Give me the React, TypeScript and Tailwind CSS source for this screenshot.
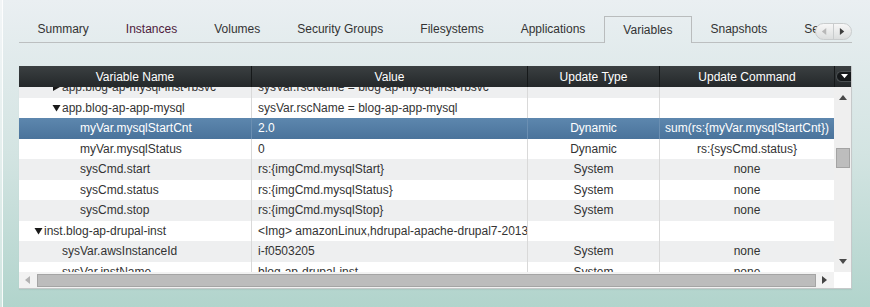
import React from "react";

// Linhas da árvore de variáveis
type Row = {
  level: number;
  arrow?: "down" | "right";
  name: string;
  value: string;
  type?: string;
  cmd?: string;
  selected?: boolean;
};

const tabs = [
  "Summary",
  "Instances",
  "Volumes",
  "Security Groups",
  "Filesystems",
  "Applications",
  "Variables",
  "Snapshots",
  "Services",
];

const rows: Row[] = [
  { level: 1, arrow: "right", name: "app.blog-ap-mysql-inst-rbsvc", value: "sysVar.rscName = blog-ap-mysql-inst-rbsvc" },
  { level: 1, arrow: "down", name: "app.blog-ap-app-mysql", value: "sysVar.rscName = blog-ap-app-mysql" },
  { level: 2, name: "myVar.mysqlStartCnt", value: "2.0", type: "Dynamic", cmd: "sum(rs:{myVar.mysqlStartCnt})", selected: true },
  { level: 2, name: "myVar.mysqlStatus", value: "0", type: "Dynamic", cmd: "rs:{sysCmd.status}" },
  { level: 2, name: "sysCmd.start", value: "rs:{imgCmd.mysqlStart}", type: "System", cmd: "none" },
  { level: 2, name: "sysCmd.status", value: "rs:{imgCmd.mysqlStatus}", type: "System", cmd: "none" },
  { level: 2, name: "sysCmd.stop", value: "rs:{imgCmd.mysqlStop}", type: "System", cmd: "none" },
  { level: 0, arrow: "down", name: "inst.blog-ap-drupal-inst", value: "<Img> amazonLinux,hdrupal-apache-drupal7-20130214" },
  { level: 1, name: "sysVar.awsInstanceId", value: "i-f0503205", type: "System", cmd: "none" },
  { level: 1, name: "sysVar.instName", value: "blog-ap-drupal-inst", type: "System", cmd: "none" },
];

const Arrow = ({ dir }: { dir: "down" | "right" }) => (
  <svg width="9" height="8" viewBox="0 0 9 8" className="shrink-0">
    {dir === "down" ? (
      <polygon points="0.5,1 8.5,1 4.5,7.5" fill="#1a1a1a" />
    ) : (
      <polygon points="1,0 8,4 1,8" fill="#1a1a1a" />
    )}
  </svg>
);

const Tri = ({ dir, color, size = 6 }: { dir: "up" | "down" | "left" | "right"; color: string; size?: number }) => {
  const pts = {
    up: "0,6 8,6 4,1",
    down: "0,1 8,1 4,6",
    left: "6,0 6,8 1,4",
    right: "1,0 1,8 6,4",
  }[dir];
  return (
    <svg width={size + 2} height={size + 2} viewBox="0 0 8 8">
      <polygon points={pts} fill={color} />
    </svg>
  );
};

const TreeRow = ({ row, index }: { row: Row; index: number }) => {
  const bg = row.selected
    ? "bg-gradient-to-b from-[#5d87ae] to-[#4a739b] text-white"
    : index % 2 === 0
    ? "bg-[#eeeff0] text-[#333]"
    : "bg-white text-[#333]";
  const divider = row.selected ? "border-[#6b8fb2]" : "border-[#d9d9d9]";
  return (
    <div className={`flex h-[20.5px] items-center ${bg}`}>
      <div className="w-[232px] shrink-0 h-full flex items-center overflow-hidden whitespace-nowrap">
        <div style={{ width: 25 + row.level * 18 }} className="shrink-0 flex justify-end pr-px">
          {row.arrow && <Arrow dir={row.arrow} />}
        </div>
        <span>{row.name}</span>
      </div>
      <div className={`w-[276px] shrink-0 h-full flex items-center border-l ${divider} pl-[6px] overflow-hidden whitespace-nowrap`}>
        {row.value}
      </div>
      <div className={`w-[132px] shrink-0 h-full flex items-center justify-center border-l ${divider} overflow-hidden whitespace-nowrap`}>
        {row.type}
      </div>
      <div className={`w-[175px] shrink-0 h-full border-l ${divider} px-[5px] overflow-hidden whitespace-nowrap text-center leading-[20.5px]`}>
        {row.cmd}
      </div>
    </div>
  );
};

export default function App() {
  return (
    <div className="w-[870px] h-[307px] flex bg-gradient-to-b from-[#eaeff2] via-[#d3e4e2] to-[#b1d4cc] font-['Liberation_Sans',Arial,sans-serif] text-[12px] text-[#333] overflow-hidden">
      {/* borda esquerda da janela */}
      <div className="w-[2px] bg-white/40" />
      <div className="w-px bg-white/90" />

      <div className="pl-[16px] flex flex-col">
        {/* Abas */}
        <div className="relative w-[833px] pt-[16px] overflow-hidden">
          <div className="flex h-[27px] whitespace-nowrap">
            {tabs.map((t) =>
              t === "Variables" ? (
                <div key={t} className="h-full flex items-center px-[18.5px] border border-b-0 border-[#b9bcbd] shrink-0">
                  {t}
                </div>
              ) : (
                <div
                  key={t}
                  className={`h-full flex items-center px-[18.5px] border-b border-[#bcbfc0] shrink-0 ${t === "Instances" ? "text-[#4e1c3c]" : ""}`}
                >
                  {t}
                </div>
              )
            )}
            <div className="flex-1 border-b border-[#bcbfc0]" />
          </div>
          {/* botões de rolagem das abas */}
          <div className="absolute right-0 top-[23px] w-[37px] h-[17px] rounded-full border border-[#c9cccd] bg-gradient-to-b from-[#f7f7f7] to-[#dcdede] flex items-center">
            <div className="flex-1 flex justify-center">
              <Tri dir="left" color="#b8b8b8" size={5} />
            </div>
            <div className="w-px h-full bg-[#c9cccd]" />
            <div className="flex-1 flex justify-center">
              <Tri dir="right" color="#3d3d3d" size={5} />
            </div>
          </div>
        </div>

        {/* Tabela */}
        <div className="mt-[23px] w-[833px] h-[223px] border-r border-b border-[#c6c9ca] flex flex-col bg-white shadow-[0_1px_1px_rgba(0,0,0,0.05)]">
          <div className="flex h-[21px] bg-gradient-to-b from-[#3b4042] to-[#24282a] text-white shrink-0">
            <div className="w-[232px] flex items-center justify-center">Variable Name</div>
            <div className="w-[276px] flex items-center justify-center border-l border-[#16191a]">Value</div>
            <div className="w-[132px] flex items-center justify-center border-l border-[#16191a]">Update Type</div>
            <div className="w-[175px] flex items-center justify-center border-l border-[#16191a]">Update Command</div>
            <div className="flex-1 flex items-center justify-end border-l border-[#16191a]">
              <div className="w-[15px] h-[11px] rounded-l-full bg-[#15181a] border border-[#4b5052] border-r-0 flex items-center justify-center">
                <Tri dir="down" color="#ffffff" size={5} />
              </div>
            </div>
          </div>

          <div className="flex h-[185px] shrink-0">
            <div className="w-[815px] overflow-hidden">
              <div className="-mt-[10px]">
                {rows.map((r, i) => (
                  <TreeRow key={r.name} row={r} index={i} />
                ))}
              </div>
            </div>
            {/* barra de rolagem vertical */}
            <div className="flex-1 bg-[#efefef] flex flex-col items-center">
              <div className="mt-[7px]">
                <Tri dir="up" color="#4a4a4a" size={6} />
              </div>
              <div className="mt-[46px] w-[14px] h-[20px] bg-[#bdbdbd] border border-[#a3a3a3]" />
              <div className="flex-1" />
              <div className="mb-[6px]">
                <Tri dir="down" color="#4a4a4a" size={6} />
              </div>
            </div>
          </div>

          {/* barra de rolagem horizontal */}
          <div className="flex flex-1">
            <div className="w-[815px] bg-[#f2f2f2] flex items-center">
              <div className="w-[18px] flex justify-center">
                <Tri dir="left" color="#b3b3b3" size={6} />
              </div>
              <div className="w-[779px] h-[13px] bg-[#bcbcbc] border border-[#a4a4a4]" />
              <div className="flex-1 flex justify-center">
                <Tri dir="right" color="#444444" size={6} />
              </div>
            </div>
            <div className="flex-1 bg-white" />
          </div>
        </div>
      </div>
    </div>
  );
}
